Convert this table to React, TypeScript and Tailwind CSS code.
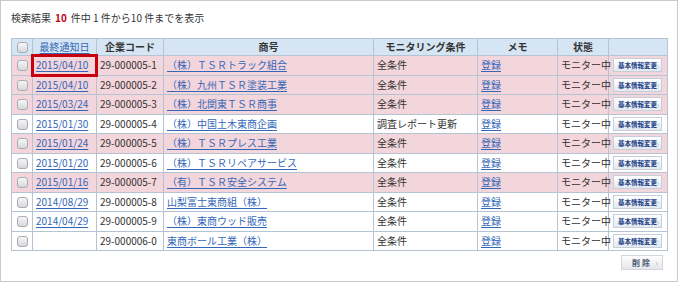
import React from "react";

type Row = { date: string; code: string; name: string; cond: string; hit: boolean };

const rows: Row[] = [
  { date: "2015/04/10", code: "29-000005-1", name: "（株）ＴＳＲトラック組合", cond: "全条件", hit: true },
  { date: "2015/04/10", code: "29-000005-2", name: "（株）九州ＴＳＲ塗装工業", cond: "全条件", hit: true },
  { date: "2015/03/24", code: "29-000005-3", name: "（株）北関東ＴＳＲ商事", cond: "全条件", hit: true },
  { date: "2015/01/30", code: "29-000005-4", name: "（株）中国土木東商企画", cond: "調査レポート更新", hit: false },
  { date: "2015/01/24", code: "29-000005-5", name: "（株）ＴＳＲプレス工業", cond: "全条件", hit: true },
  { date: "2015/01/20", code: "29-000005-6", name: "（株）ＴＳＲリペアサービス", cond: "全条件", hit: false },
  { date: "2015/01/16", code: "29-000005-7", name: "（有）ＴＳＲ安全システム", cond: "全条件", hit: true },
  { date: "2014/08/29", code: "29-000005-8", name: "山梨富士東商組（株）", cond: "全条件", hit: false },
  { date: "2014/04/29", code: "29-000005-9", name: "（株）東商ウッド販売", cond: "全条件", hit: false },
  { date: "", code: "29-000006-0", name: "東商ボール工業（株）", cond: "全条件", hit: false },
];

const font = { fontFamily: '"Noto Sans CJK JP", "Noto Sans", sans-serif' };

function Check() {
  return (
    <span className="inline-block w-[11px] h-[11px] rounded-[3px] border border-[#a9adb3] bg-gradient-to-b from-[#f6f6f6] to-[#d6d8db] align-middle" />
  );
}

const cell = "border border-[#b5c3d3] px-[3px] py-0 whitespace-nowrap";
const link = "text-[#3467b8] underline underline-offset-2";

export default function App() {
  return (
    <div className="w-[680px] h-[284px] bg-white text-[#333] text-[10px] leading-none" style={font}>
      <div className="w-[678px] h-[282px] border border-[#c9c9c9] px-[10px] pt-[10px]">
        <p className="h-[14px] flex items-center gap-[4px] text-[10px]">
          検索結果 <span className="text-[#c40016] font-bold">10</span> 件中 1 件から10 件までを表示
        </p>

        <table className="mt-[13px] w-[656px] table-fixed border-collapse">
          <colgroup>
            <col className="w-[21px]" />
            <col className="w-[64px]" />
            <col className="w-[67px]" />
            <col className="w-[210px]" />
            <col className="w-[104px]" />
            <col className="w-[80px]" />
            <col className="w-[51px]" />
            <col className="w-[59px]" />
          </colgroup>
          <thead>
            <tr className="h-[17px] bg-[#d5e5f3] font-bold">
              <th className={cell + " text-center"}><Check /></th>
              <th className={cell + " text-center font-normal"}><span className={link}>最終通知日</span></th>
              <th className={cell + " text-center"}>企業コード</th>
              <th className={cell + " text-center"}>商号</th>
              <th className={cell + " text-center"}>モニタリング条件</th>
              <th className={cell + " text-center"}>メモ</th>
              <th className={cell + " text-center"}>状態</th>
              <th className={cell}></th>
            </tr>
          </thead>
          <tbody>
            {rows.map((r, i) => (
              <tr key={r.code} className={(r.hit ? "bg-[#f3d5dc]" : "bg-white") + " h-[19.5px]"}>
                <td className={cell + " text-center"}><Check /></td>
                <td className={cell + " relative"}>
                  <span className={link}>{r.date}</span>
                  {i === 0 && (
                    <span className="absolute -inset-[2px] border-[3px] border-[#c8000e]" />
                  )}
                </td>
                <td className={cell}>{r.code}</td>
                <td className={cell}><span className={link}>{r.name}</span></td>
                <td className={cell}>{r.cond}</td>
                <td className={cell}><span className={link}>登録</span></td>
                <td className={cell + " text-right pr-[2px]"}>モニター中</td>
                <td className={cell + " px-[4px]"}>
                  <span className="flex items-center justify-between w-[49px] h-[14px] pl-[4px] pr-[3px] border border-[#c6cfd9] bg-gradient-to-b from-white to-[#e3e9f0] text-[6.5px] font-bold text-[#233f86]">
                    基本情報変更
                    <span className="text-[#a8b0ba] font-normal text-[7px]">›</span>
                  </span>
                </td>
              </tr>
            ))}
          </tbody>
        </table>

        <div className="w-[656px] flex justify-end pr-[4px] mt-[4px]">
          <span className="flex items-center justify-between w-[42px] h-[15px] pl-[10px] pr-[4px] border border-[#d3d6da] bg-gradient-to-b from-white to-[#e4e6ea] text-[8px] font-bold text-[#4a5670] tracking-[2px]">
            削除
            <span className="text-[#a0a6ae] font-normal tracking-normal">›</span>
          </span>
        </div>
      </div>
    </div>
  );
}
